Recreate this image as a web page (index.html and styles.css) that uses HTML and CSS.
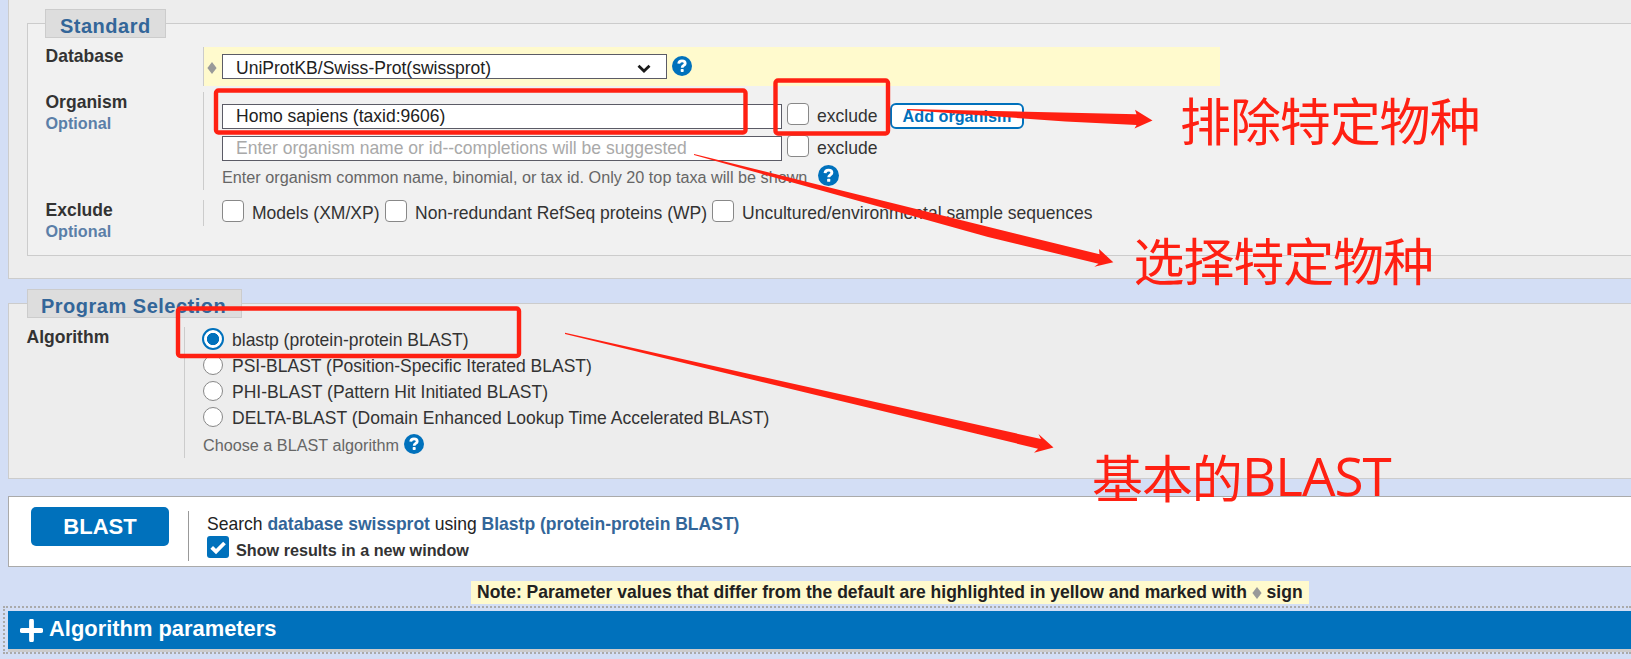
FILE: index.html
```html
<!DOCTYPE html>
<html lang="en">
<head>
<meta charset="utf-8">
<title>Protein BLAST</title>
<link rel="stylesheet" href="styles.css">
</head>
<body>
<svg class="defs" width="0" height="0">
  <symbol id="help" viewBox="0 0 20 20">
    <circle cx="10" cy="10" r="10" fill="#0071bc"/>
    <path d="M6.700 7.700C6.900 5.700 8.300 4.900 10 4.900s3.200.9 3.200 2.500c0 2.100-3 2-3 4.300" fill="none" stroke="#fff" stroke-width="2.800"/>
    <rect x="8.700" y="13" width="3" height="3" rx=".8" fill="#fff"/>
  </symbol>
  <symbol id="diamond" viewBox="0 0 10 12">
    <path d="M5 0l4.600 6L5 12 .4 6z" fill="#999"/>
  </symbol>
</svg>
<main class="page">
  <section class="search-set">
    <div class="group">
      <h2 class="legend legend-standard">Standard</h2>
      <div class="row row-database">
        <div class="label">Database</div>
        <div class="field changed">
          <svg class="mark"><use href="#diamond"/></svg>
          <div class="select"><span>UniProtKB/Swiss-Prot(swissprot)</span>
            <svg class="chevron" viewBox="0 0 14 9"><path d="M1.500 1.800L7 7l5.500-5.200" fill="none" stroke="#1a1a1a" stroke-width="2.800"/></svg>
          </div>
          <svg class="help"><use href="#help"/></svg>
        </div>
      </div>
      <div class="row row-organism">
        <div class="label">Organism<span class="optional">Optional</span></div>
        <div class="field">
          <div class="line line-first">
            <input class="text" type="text" value="Homo sapiens (taxid:9606)">
            <span class="check"></span><span class="caption">exclude</span>
            <button class="add">Add organism</button>
          </div>
          <div class="line">
            <input class="text" type="text" placeholder="Enter organism name or id--completions will be suggested">
            <span class="check"></span><span class="caption">exclude</span>
          </div>
          <div class="hint-line"><span class="hint hint-organism">Enter organism common name, binomial, or tax id. Only 20 top taxa will be shown</span><svg class="help help-large"><use href="#help"/></svg></div>
        </div>
      </div>
      <div class="row row-exclude">
        <div class="label">Exclude<span class="optional">Optional</span></div>
        <div class="field options">
          <label class="option models"><span class="check"></span><span>Models (XM/XP)</span></label>
          <label class="option refseq"><span class="check"></span><span>Non-redundant RefSeq proteins (WP)</span></label>
          <label class="option"><span class="check"></span><span>Uncultured/environmental sample sequences</span></label>
        </div>
      </div>
    </div>
  </section>

  <section class="program">
    <h2 class="legend legend-program">Program Selection</h2>
    <div class="row row-algorithm">
      <div class="label">Algorithm</div>
      <div class="field">
        <label class="choice"><span class="radio on"></span><span>blastp (protein-protein BLAST)</span></label>
        <label class="choice"><span class="radio"></span><span>PSI-BLAST (Position-Specific Iterated BLAST)</span></label>
        <label class="choice"><span class="radio"></span><span>PHI-BLAST (Pattern Hit Initiated BLAST)</span></label>
        <label class="choice"><span class="radio"></span><span>DELTA-BLAST (Domain Enhanced Lookup Time Accelerated BLAST)</span></label>
        <div class="choose"><span class="hint">Choose a BLAST algorithm</span><svg class="help"><use href="#help"/></svg></div>
      </div>
    </div>
  </section>

  <section class="submit">
    <button class="blast">BLAST</button>
    <div class="summary">
      <div class="summary-text">Search <b>database swissprot</b> using <b>Blastp (protein-protein BLAST)</b></div>
      <label class="new-window">
        <svg class="ticked" viewBox="0 0 22 22"><rect width="22" height="22" rx="3" fill="#0071bc"/><path d="M4.700 11.300l4.300 4.200 8.500-8.500" fill="none" stroke="#fff" stroke-width="3.800"/></svg>
        <span>Show results in a new window</span>
      </label>
    </div>
  </section>

  <div class="note-line"><p class="note">Note: Parameter values that differ from the default are highlighted in yellow and marked with <svg class="note-mark"><use href="#diamond"/></svg> sign</p></div>

  <div class="params">
    <div class="params-bar">
      <svg class="plus" viewBox="0 0 23 23"><path d="M11.500 2v19M2 11.500h19" stroke="#fff" stroke-width="4.800" stroke-linecap="round"/></svg>
      <span>Algorithm parameters</span>
    </div>
  </div>

  <svg class="annotations" viewBox="0 0 1631 659">
    <g fill="none" stroke="#ff2012" stroke-width="4.400">
      <rect x="216" y="90.500" width="529.500" height="42" rx="2.500"/>
      <rect x="775.500" y="80.500" width="112.500" height="53" rx="2.500"/>
      <rect x="178" y="308.500" width="341" height="47.500" rx="2.500"/>
    </g>
    <g fill="#ff2012">
      <path d="M907 109l229.500 5.300-1.500-4.500 17.500 10.700L1134.500 128.500l2-3.500-71-3.500L907 110z"/>
      <path d="M694 154l405.500 100.300-.5-5.300 14.300 13.300-19 4.400 4.200-3L988 237 694 155z"/>
      <path d="M565 332.800L1041 439l-2.500-5 15 13.500-19.500 5.200 4-4L820 396 565 334z"/>
    </g>
    <g class="remarks" fill="#ff2012">
      <text x="1180" y="141">排除特定物种</text>
      <text x="1133.500" y="281">选择特定物种</text>
      <text x="1092" y="498">基本的</text>
      <text class="latin" x="1242" y="496">BLAST</text>
    </g>
  </svg>
</main>
</body>
</html>
```
FILE: styles.css
```css
* { box-sizing: border-box; }
body { margin: 0; background: #d3def5; color: #333; font: 17.52px/20px "Liberation Sans", Arial, sans-serif; }
.page { position: relative; width: 1631px; height: 659px; overflow: hidden; display: flex; flex-direction: column; }
.defs { display: none; }
svg { flex: none; }

.search-set { margin-left: 8px; height: 279px; padding: 23px 0 0 18px; background: #ededed; border: solid #ccc; border-width: 0 0 1px 1px; }
.group { height: 233px; background: #f1f1f1; border: solid #ccc; border-width: 1px 0 1px 1px; }
.legend { margin: -15px 0 0; height: 29px; background: #ddd; border: 1px solid #ccc; color: #369; font-size: 20px; line-height: 32px; letter-spacing: .5px; padding-left: 14px; white-space: nowrap; }
.legend-standard { margin-left: 17px; width: 121px; }

.row { display: grid; grid-template-columns: 157.5px 1fr; padding-left: 17.5px; }
.label { font-weight: bold; }
.optional { display: block; margin-top: 1px; font-size: 16.2px; color: #5b7fa8; }
.field { border-left: 1px solid #ccc; }
.row-database { margin-top: 9px; height: 39px; }
.row-database .label { margin-top: -1px; }
.changed { width: 1017px; background: #fffacd; display: flex; align-items: flex-start; padding: 7px 0 0 3px; }
.mark { width: 10px; height: 12px; margin: 8px 5px 0 0; }
.select { width: 445px; height: 25px; border: 1px solid #5b5b66; background: #fff; color: #212121; display: flex; justify-content: space-between; padding: 1px 15px 0 13px; line-height: 24px; }
.chevron { width: 14px; height: 9px; margin-top: 8px; }
.help { width: 20px; height: 20px; margin: 2px 0 0 5px; }

.row-organism { margin-top: 6px; height: 98px; }
.row-organism .field { padding: 12px 0 0 18px; }
.line { display: flex; align-items: flex-start; height: 32px; }
.text { width: 560px; height: 25px; margin: 0 5px 0 0; border: 1px solid #5b5b66; background: #fff; padding: 0 13px; font: inherit; line-height: 23px; color: #212121; }
.text::placeholder { color: #a9a9a9; opacity: 1; }
.check { flex: none; width: 22px; height: 22px; margin-top: -1px; border: 1px solid #888; border-radius: 4px; background: #fff; }
.caption { margin: 2px 0 0 8px; line-height: 20px; width: 61px; }
.add { width: 134px; height: 26px; margin: -1px 0 0 12px; padding: 0; border: 2px solid #0071bc; border-radius: 6px; background: #fff; color: #0071bc; font: bold 16.2px/22px "Liberation Sans", Arial, sans-serif; }
.hint { font-size: 16.22px; color: #666; }
.hint-line { display: flex; align-items: flex-start; }
.hint-organism { margin-top: -1px; line-height: 20px; width: 586px; white-space: nowrap; }
.help-large { width: 21px; height: 21px; margin: -3px 0 0 10px; }

.row-exclude { margin-top: 10px; height: 26px; }
.options { display: flex; height: 26px; padding-left: 18px; }
.option { display: flex; white-space: nowrap; }
.option .check { margin-top: 0; }
.option span:last-child { margin: 3px 0 0 8px; }
.models { width: 163px; }
.refseq { width: 327px; }

.program { margin: 24px 0 0 8px; height: 176px; background: #ededed; border: solid #ccc; border-width: 1px 0 1px 1px; }
.legend-program { margin-left: 18px; width: 215px; padding-left: 13px; }
.row-algorithm { margin-top: 9px; height: 131px; }
.choice { display: flex; align-items: center; height: 26px; padding: 0 0 0 17px; }
.choice:first-child { height: 24px; }
.choice:nth-child(2) { height: 27px; padding-top: 1px; }
.choice span:last-child { margin: 2px 0 0 8px; }
.radio { width: 20px; height: 20px; border: 1px solid #888; border-radius: 50%; background: #fff; margin: 0 1px; }
.radio.on { width: 22px; height: 22px; margin: 0; border: 2px solid #0071bc; background: radial-gradient(circle, #0071bc 5.800px, #fff 6.400px); }
.choose { display: flex; align-items: center; padding: 4px 0 0 18px; }
.choose .hint { margin-top: 1px; }
.choose .help { margin: -2px 0 0 5px; }

.submit { margin: 17px 0 0 8px; height: 71px; background: #fff; border: solid #aaa; border-width: 1px 0 1px 1px; display: flex; align-items: flex-start; padding-left: 22px; }
.blast { margin-top: 10px; width: 138px; height: 39px; padding: 0; border: 0; border-radius: 5px; background: #0071bc; color: #fff; font: bold 22px/39px "Liberation Sans", Arial, sans-serif; }
.summary { margin: 14px 0 0 19px; height: 50px; border-left: 1px solid #999; padding-left: 18px; }
.summary-text { line-height: 26px; height: 25px; color: #222; }
.summary-text b { color: #369; }
.new-window { display: flex; align-items: flex-start; font-size: 16.2px; font-weight: bold; }
.ticked { width: 22px; height: 22px; }
.new-window span { margin: 4px 0 0 7px; }

.note-line { margin-top: 14px; height: 25px; padding-left: 471px; }
.note { display: inline-block; margin: 0; width: 838px; height: 23px; padding-left: 6px; background: #fffacd; color: #212121; font-weight: bold; line-height: 22px; white-space: nowrap; }
.note-mark { width: 10px; height: 12px; vertical-align: -1px; }

.params { margin-left: 3px; height: 48px; border: dotted #aaa; border-width: 2px 0 2px 2px; padding: 3px 0 0 3px; }
.params-bar { height: 38px; background: #0071bc; color: #fff; font-size: 21.9px; font-weight: bold; display: flex; align-items: center; padding-left: 12px; box-shadow: 0 3px 0 #ccc; }
.plus { width: 23px; height: 23px; margin-right: 6px; }
.params-bar span { margin-top: -2px; }

.annotations { position: absolute; inset: 0; width: 1631px; height: 659px; pointer-events: none; }
.remarks { font: 400 51px "Noto Sans CJK SC", sans-serif; letter-spacing: -1.100px; }
.latin { font: 400 53px "Open Sans", "Noto Sans", sans-serif; letter-spacing: -1px; }
```
